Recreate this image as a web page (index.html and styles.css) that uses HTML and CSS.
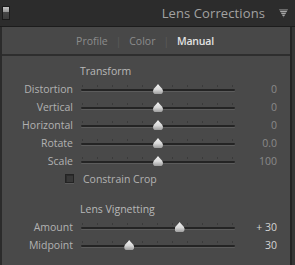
FILE: index.html
```html
<!DOCTYPE html>
<html>
<head>
<meta charset="utf-8">
<link rel="stylesheet" href="styles.css">
</head>
<body>
<div class="app">
  <header class="hdr">
    <span class="switch"></span>
    <span class="title">Lens Corrections</span>
    <svg class="collapse" width="9" height="9" viewBox="0 0 9 9">
      <defs>
        <pattern id="st" width="9" height="2" patternUnits="userSpaceOnUse">
          <rect width="9" height="1" fill="#a6a6a6"/>
          <rect y="1" width="9" height="1" fill="#5e5e5e"/>
        </pattern>
      </defs>
      <polygon points="0,0.5 9,0.5 4.5,8.5" fill="url(#st)"/>
    </svg>
  </header>
  <div class="panel">
    <nav class="tabs">
      <span class="tab">Profile</span>
      <span class="sep">|</span>
      <span class="tab">Color</span>
      <span class="sep">|</span>
      <span class="tab active">Manual</span>
    </nav>
    <div class="body">
      <div class="grid">
        <div class="heading">Transform</div>

        <span class="label">Distortion</span>
        <div class="slider"><div class="rail"><span class="thumb" style="left:50%"></span></div></div>
        <span class="val">0</span>

        <span class="label">Vertical</span>
        <div class="slider"><div class="rail"><span class="thumb" style="left:50%"></span></div></div>
        <span class="val">0</span>

        <span class="label">Horizontal</span>
        <div class="slider"><div class="rail"><span class="thumb" style="left:50%"></span></div></div>
        <span class="val">0</span>

        <span class="label">Rotate</span>
        <div class="slider"><div class="rail"><span class="thumb" style="left:50%"></span></div></div>
        <span class="val">0.0</span>

        <span class="label">Scale</span>
        <div class="slider"><div class="rail"><span class="thumb" style="left:50%"></span></div></div>
        <span class="val">100</span>

        <span class="check-cell"><span class="checkbox"></span></span>
        <span class="check-label">Constrain Crop</span>
      </div>

      <div class="grid section">
        <div class="heading">Lens Vignetting</div>

        <span class="label">Amount</span>
        <div class="slider"><div class="rail"><span class="thumb" style="left:65%"></span></div></div>
        <span class="val on">+ 30</span>

        <span class="label">Midpoint</span>
        <div class="slider"><div class="rail"><span class="thumb" style="left:30%"></span></div></div>
        <span class="val on">30</span>
      </div>
    </div>
  </div>
</div>
</body>
</html>
```

FILE: styles.css
```css
* { box-sizing: border-box; }
html, body { margin: 0; padding: 0; }
body {
  background: #363636;
  font-family: "Open Sans", "Liberation Sans", sans-serif;
}
.app {
  width: 295px;
  height: 265px;
  display: flex;
  flex-direction: column;
  background: #363636;
  overflow: hidden;
}
.hdr {
  height: 27px;
  flex: none;
  display: flex;
  align-items: center;
  padding: 0 7px 0 2px;
  background: #2c2c2c;
  border-bottom: 1px solid #1c1c1c;
}
.switch {
  width: 8px;
  height: 14px;
  margin-top: -1px;
  border: 1px solid #1a1a1a;
  background: linear-gradient(#c4c4c4 0, #8e8e8e 45%, #454545 45%, #3c3c3c 100%);
}
.title {
  margin-left: auto;
  font-size: 13px;
  color: #a2a2a2;
  letter-spacing: 0.1px;
}
.collapse {
  margin-left: 14px;
  margin-top: 1px;
}
.panel {
  flex: 1;
  margin-right: 3px;
  border-left: 2px solid #2b2b2b;
  border-right: 2px solid #242424;
  background: #494949;
  display: flex;
  flex-direction: column;
}
.tabs {
  height: 29px;
  flex: none;
  display: flex;
  align-items: center;
  justify-content: center;
  gap: 8px;
  padding-right: 2px;
  border-bottom: 2px solid #2e2e2e;
  font-size: 10.5px;
  background: #484848;
}
.tab { color: #8c8c8c; }
.tab.active { color: #e2e2e2; font-weight: 600; letter-spacing: -0.2px; }
.sep { color: #5c5c5c; font-size: 10px; }
.body {
  padding-top: 6px;
}
.grid {
  display: grid;
  grid-template-columns: 79px 154px 42px;
  grid-auto-rows: 18px;
  font-size: 10.5px;
  color: #b2b2b2;
}
.section {
  margin-top: 12px;
}
.heading {
  grid-column: 2 / 4;
  margin-left: -1px;
  line-height: 18px;
  color: #b8b8b8;
}
.label {
  text-align: right;
  padding-right: 8px;
  line-height: 18px;
  white-space: nowrap;
}
.slider {
  position: relative;
}
.slider::before {
  content: "";
  position: absolute;
  left: 0;
  right: 0;
  top: 9px;
  height: 2px;
  border-radius: 1px;
  background: #242424;
  box-shadow: 0 1px 0 #5c5c5c;
}
.slider::after {
  content: "";
  position: absolute;
  left: 1px;
  width: 152px;
  top: 5px;
  height: 2px;
  background: repeating-linear-gradient(to right, #3a3a3a 0 1px, transparent 1px 15px);
}
.rail {
  position: absolute;
  left: 5px;
  right: 5px;
  top: 0;
  bottom: 0;
  z-index: 1;
}
.thumb {
  position: absolute;
  top: 4px;
  width: 10px;
  height: 10px;
  transform: translateX(-50%);
  background: linear-gradient(#f4f4f4, #d8d8d8 55%, #9c9c9c);
  clip-path: polygon(50% 0, 62% 15%, 92% 48%, 100% 68%, 96% 90%, 84% 100%, 16% 100%, 4% 90%, 0 68%, 8% 48%, 38% 15%);
}
.val {
  text-align: right;
  line-height: 18px;
  color: #8a8a8a;
  white-space: pre;
}
.val.on { color: #d4d4d4; }
.check-cell {
  display: flex;
  justify-content: flex-end;
  align-items: center;
  padding-right: 7px;
}
.checkbox {
  width: 9px;
  height: 9px;
  margin-top: -2px;
  border: 1px solid #232323;
  background: #383838;
  box-shadow: inset 1px 1px 0 #2c2c2c, 0 1px 0 #5a5a5a;
}
.check-label {
  grid-column: 2 / 4;
  padding-left: 2px;
  line-height: 18px;
}
```
